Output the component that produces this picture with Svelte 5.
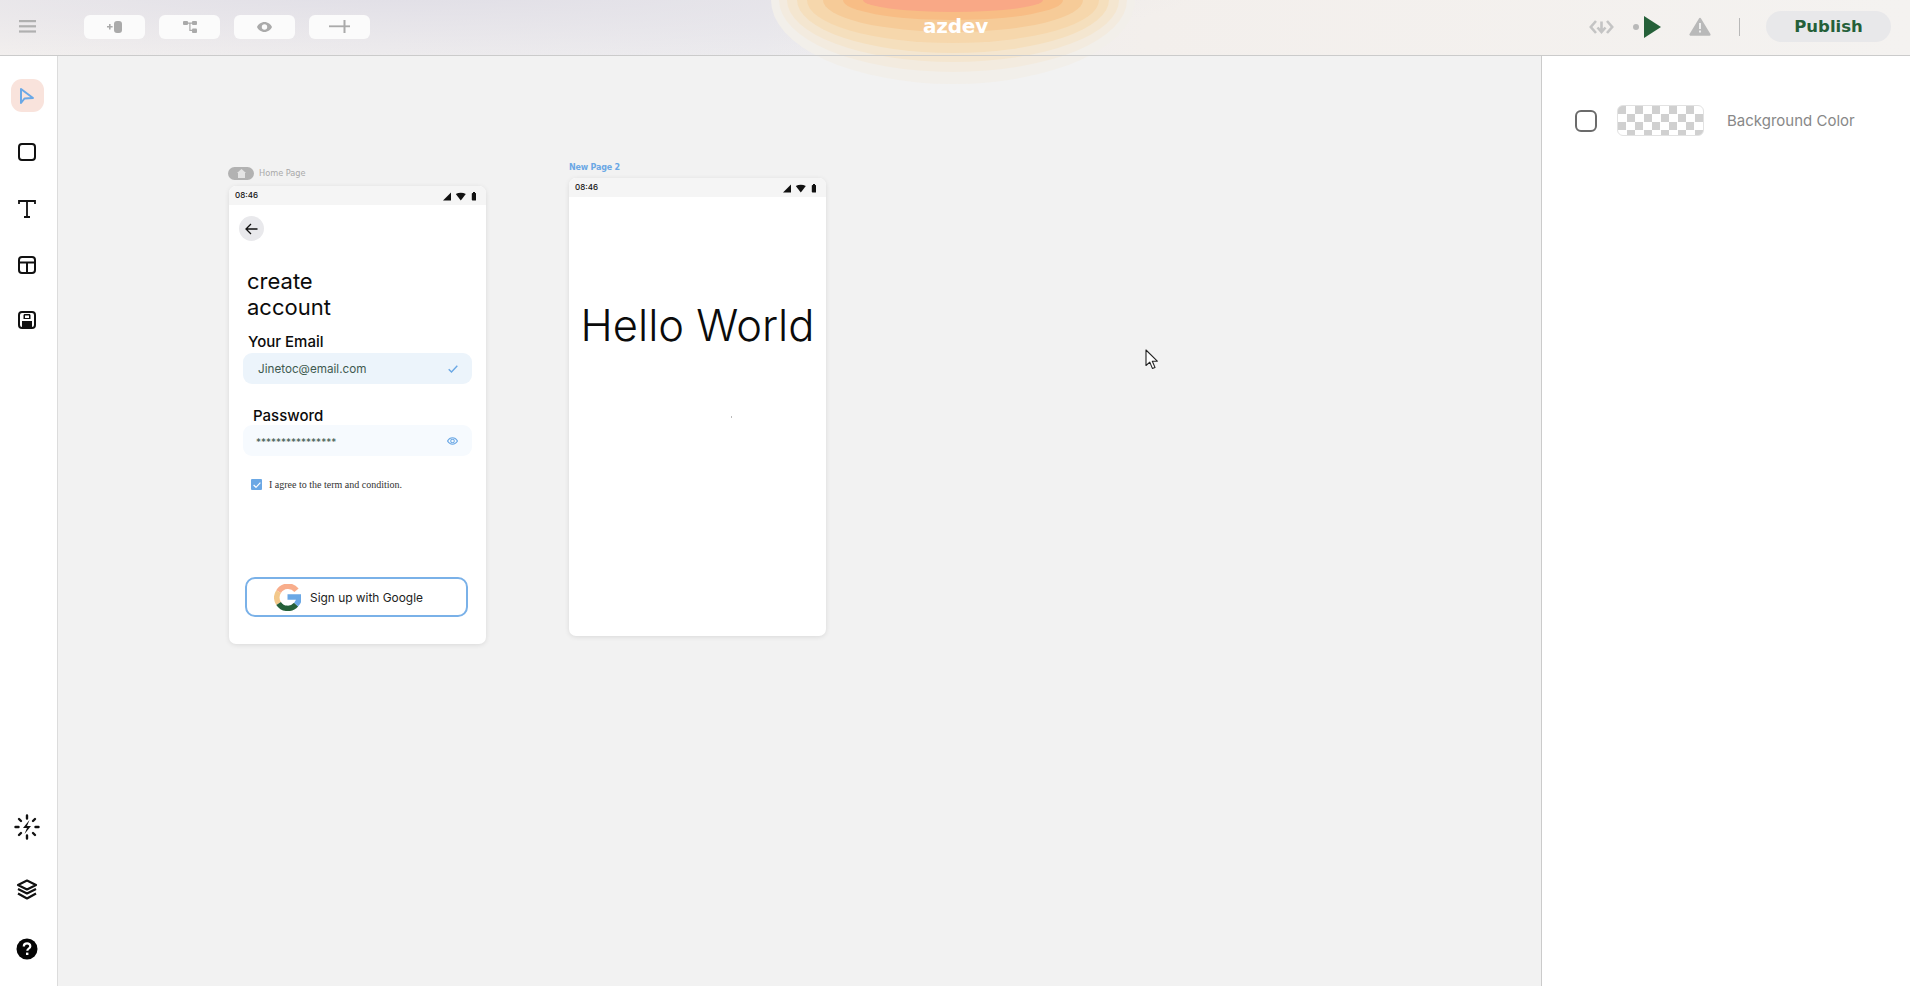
<script lang="ts">
	// stepped glow behind the logo: half width, depth, colour (outermost first)
	const rings = [
		{ a: 182, b: 84, c: '#f2efea' },
		{ a: 174, b: 72, c: '#f3ebdf' },
		{ a: 166, b: 62, c: '#f4e6d0' },
		{ a: 156, b: 53, c: '#f5dfbd' },
		{ a: 146, b: 43, c: '#f6d7ac' },
		{ a: 130, b: 32, c: '#f6cb98' },
		{ a: 110, b: 20, c: '#f8bd85' },
		{ a: 90, b: 12, c: '#f9a886' }
	];
</script>

{#snippet statusBar()}
	<div class="status">
		<span>08:46</span>
		<svg width="33" height="10" viewBox="0 0 33 10" fill="#111">
			<path d="M0 9.500 8 1.500v8z" />
			<path d="M12.800 3c3-1.700 7-1.700 10 0l-5 6.500z" />
			<rect x="28.800" y="2" width="4.400" height="7.500" rx=".8" />
			<rect x="30" y="1" width="2" height="1.500" />
		</svg>
	</div>
{/snippet}

<div class="app">
	<header class="topbar">
		<div class="glow">
			{#each rings as r}
				<i style="width:{r.a * 2}px;height:{r.b * 2}px;margin-left:{-r.a}px;margin-top:{-r.b}px;background:{r.c}"></i>
			{/each}
		</div>
		<div class="top-left">
			<button class="menu" aria-label="menu">
				<svg width="17" height="13" viewBox="0 0 17 13" fill="#b0b0b0"><rect y="0" width="17" height="2.200" /><rect y="5.200" width="17" height="2.200" /><rect y="10.400" width="17" height="2.200" /></svg>
			</button>
			<div class="top-tools">
				<button class="tool-btn" aria-label="add screen">
					<svg width="16" height="12" viewBox="0 0 16 12" fill="#aaa"><rect x="7" y="0" width="8" height="12" rx="3" /><path d="M0 5h2V3h1.600v2h2v1.600h-2v2H2v-2H0z" /></svg>
				</button>
				<button class="tool-btn" aria-label="flow">
					<svg width="14" height="12" viewBox="0 0 14 12" fill="#aaa"><rect x="0" y="0" width="5" height="4" rx="1" /><rect x="9" y="0" width="5" height="4" rx="1" /><rect x="9" y="7.500" width="5" height="4.500" rx="1" /><path d="M5 1.500h4v1.200H7.500v6H9v1.200H6.300V2.700H5z" /></svg>
				</button>
				<button class="tool-btn" aria-label="preview">
					<svg width="15" height="10" viewBox="0 0 15 10"><path fill-rule="evenodd" fill="#aaa" d="M7.500 0C11 0 13.800 2.400 15 5c-1.200 2.600-4 5-7.500 5S1.200 7.600 0 5C1.200 2.400 4 0 7.500 0zm0 2.300a2.700 2.700 0 1 0 0 5.400 2.700 2.700 0 0 0 0-5.400z" /></svg>
				</button>
				<button class="tool-btn" aria-label="add">
					<svg width="21" height="13" viewBox="0 0 21 13" fill="#aaa"><rect x="0" y="5.400" width="21" height="1.800" /><rect x="14.500" y="0" width="2" height="13" /></svg>
				</button>
			</div>
		</div>
		<div class="logo">azdev</div>
		<div class="top-right">
			<svg width="25" height="18" viewBox="0 0 25 18" fill="none" stroke="#c4c4c4" stroke-width="2.600"><path d="M7 3 1.800 9 7 15M18 3l5.200 6-5.200 6M12.500 3.500v10M8.500 9.500l4 4.500 4-4.500" /></svg>
			<i class="run-dot"></i>
			<svg class="play" width="17" height="22" viewBox="0 0 17 22" fill="#256039"><path d="M0 0 17 11 0 22z" /></svg>
			<svg class="warn" width="22" height="19" viewBox="0 0 22 19"><path fill="#b9b9b9" stroke="#b9b9b9" stroke-width="2.400" stroke-linejoin="round" d="M11 2 1.600 17.500h18.800z" /><rect x="10" y="6" width="2" height="6" fill="#eee" /><rect x="10" y="13.500" width="2" height="2" fill="#eee" /></svg>
			<i class="sep"></i>
			<button class="publish">Publish</button>
		</div>
	</header>

	<div class="body">
		<nav class="sidebar">
			<div class="nav-group">
				<button class="nav-btn active" aria-label="select">
					<svg width="16" height="18" viewBox="0 0 16 18" fill="none" stroke="#6aa8e6" stroke-width="2"><path d="M2 2 14 11 5.500 11.500 2 16z" stroke-linejoin="round" /></svg>
				</button>
				<button class="nav-btn" aria-label="rectangle">
					<svg width="20" height="20" viewBox="0 0 20 20" fill="none" stroke="#111" stroke-width="2"><rect x="2" y="2" width="16" height="16" rx="3" /></svg>
				</button>
				<button class="nav-btn" aria-label="text">
					<svg width="20" height="20" viewBox="0 0 20 20" fill="none" stroke="#111" stroke-width="1.800"><path d="M2 5V2h16v3M10 2v16M7 18h6" /></svg>
				</button>
				<button class="nav-btn" aria-label="layout">
					<svg width="20" height="20" viewBox="0 0 20 20" fill="none" stroke="#111" stroke-width="2"><rect x="2" y="2" width="16" height="16" rx="3" /><path d="M2 7.500h16M10 7.500V18" /></svg>
				</button>
				<button class="nav-btn" aria-label="component">
					<svg width="20" height="20" viewBox="0 0 20 20"><rect x="2" y="2" width="16" height="16" rx="3" fill="none" stroke="#111" stroke-width="2" /><rect x="5" y="11" width="10" height="7" fill="#111" /><path d="M6.500 9V5.500c0-1 .5-1.500 1.500-1.500h4c1 0 1.500.5 1.500 1.500V9z" fill="#111" /><rect x="8" y="5.500" width="4" height="2.500" fill="#fff" /></svg>
				</button>
			</div>
			<div class="nav-group bottom">
				<button class="nav-btn" aria-label="ai">
					<svg width="26" height="26" viewBox="0 0 26 26" fill="none" stroke="#111" stroke-width="2.400" stroke-linecap="round"><path d="M13 1.500v3M13 21.500v3M1.500 13h3M21.500 13h3M5 5l2 2M19 19l2 2M21 5l-2 2M7 19l-2 2" /><path d="M15.500 6 9 14h4l-2.500 6 6.500-8h-4z" fill="#111" stroke="none" /></svg>
				</button>
				<button class="nav-btn layers" aria-label="layers">
					<svg width="22" height="22" viewBox="0 0 22 22" fill="none" stroke="#111" stroke-width="2.200" stroke-linejoin="round"><path d="M11 1.500 20 6l-9 4.500L2 6z" /><path d="M2 10 11 14.500 20 10" /><path d="M2 14.500 11 19.500l9-5" /></svg>
				</button>
				<button class="nav-btn" aria-label="help">
					<svg width="22" height="22" viewBox="0 0 22 22"><circle cx="11" cy="11" r="10.500" fill="#050505" /><path d="M7.800 8.500c0-2 1.400-3.100 3.300-3.100s3.200 1.100 3.200 2.800c0 2.300-3 2.300-3 4.600" fill="none" stroke="#fff" stroke-width="2.200" /><rect x="10" y="14.600" width="2.400" height="2.400" fill="#fff" /></svg>
				</button>
			</div>
		</nav>

		<main class="canvas">
			<div class="page-label home-label" style="left:170px;top:111px">
				<span class="home-pill">
					<svg width="9" height="9" viewBox="0 0 9 9" fill="#e4e4e4"><path d="M4.500 0 9 4H8v5H1V4H0z" /></svg>
				</span>
				<span>Home Page</span>
			</div>
			<section class="phone" style="left:171px;top:130px;height:458px">
				{@render statusBar()}
				<div class="phone-body">
					<button class="back" aria-label="back">
						<svg width="13" height="12" viewBox="0 0 13 12" fill="none" stroke="#111" stroke-width="1.300"><path d="M12.500 6H1M6 1 1 6l5 5" /></svg>
					</button>
					<h1>create<br />account</h1>
					<label class="field-label" for="email">Your Email</label>
					<div class="input filled" id="email">
						<span>Jinetoc@email.com</span>
						<svg width="10" height="8" viewBox="0 0 10 8" fill="none" stroke="#6ba8e5" stroke-width="1.400"><path d="M.7 4.200 3.500 7 9.300.7" /></svg>
					</div>
					<label class="field-label pw" for="password">Password</label>
					<div class="input" id="password">
						<span class="stars">****************</span>
						<svg width="11" height="8" viewBox="0 0 11 8" fill="none" stroke="#6ba8e5" stroke-width="1.100"><path d="M.5 4C1.800 1.800 3.500.8 5.500.8S9.200 1.800 10.500 4C9.200 6.200 7.500 7.200 5.500 7.200S1.800 6.200.5 4z" /><circle cx="5.500" cy="4" r="1.800" /></svg>
					</div>
					<div class="agree">
						<span class="check">
							<svg width="8" height="6" viewBox="0 0 8 6" fill="none" stroke="#fff" stroke-width="1.200"><path d="M.6 3 3 5.300 7.400.6" /></svg>
						</span>
						<span>I agree to the term and condition.</span>
					</div>
					<button class="google">
						<svg width="27" height="27" viewBox="0 0 27 27" fill="none" stroke-width="5.500">
							<path d="M22.500 6.200A11 11 0 0 0 4.600 7.600" stroke="#f8ad8b" />
							<path d="M4.600 7.600a11 11 0 0 0 0 11.800" stroke="#f3c88b" />
							<path d="M4.600 19.400a11 11 0 0 0 17.500 1.200" stroke="#256039" />
							<path d="M22.100 20.600c2.300-2.300 3.200-4.700 2.900-7.600H13.500" stroke="#6ba8e5" />
						</svg>
						<span>Sign up with Google</span>
					</button>
				</div>
			</section>

			<div class="page-label new-label" style="left:511px;top:105px">New Page 2</div>
			<section class="phone" style="left:511px;top:122px;height:458px">
				{@render statusBar()}
				<div class="hello-wrap">
					<div class="hello">Hello World</div>
					<i class="speck"></i>
				</div>
			</section>

			<svg class="cursor" width="14" height="21" viewBox="0 0 14 21"><path d="M1 1v15.500l3.800-3.400 2.600 6.300 2.600-1-2.700-6.200h5z" fill="#fff" stroke="#222" stroke-width="1.100" stroke-linejoin="round" /></svg>
		</main>

		<aside class="panel">
			<div class="bg-row">
				<span class="box"></span>
				<span class="swatch"></span>
				<span class="bg-label">Background Color</span>
			</div>
		</aside>
	</div>
</div>

<style>
	:global(body) {
		margin: 0;
		background: #f2f2f2;
		font-family: Inter, 'Liberation Sans', sans-serif;
	}
	button {
		border: none;
		background: none;
		padding: 0;
		font: inherit;
		cursor: pointer;
	}
	.app {
		width: 1910px;
		height: 986px;
		display: flex;
		flex-direction: column;
		overflow: hidden;
	}

	/* header */
	.topbar {
		height: 56px;
		box-sizing: border-box;
		padding-bottom: 3px;
		flex-shrink: 0;
		display: flex;
		align-items: center;
		justify-content: space-between;
		position: relative;
		background:
			radial-gradient(ellipse 800px 75px at 400px -10px, #e0dee6 0%, rgba(224, 222, 230, 0) 100%),
			linear-gradient(90deg, #f2efee 0%, #ecebee 40%, #f3efec 60%, #f4f2f0 100%);
		z-index: 2;
	}
	.topbar::after {
		content: '';
		position: absolute;
		left: 0;
		right: 0;
		bottom: 0;
		height: 1px;
		background: #cbcbcb;
	}
	.glow {
		position: absolute;
		left: 953px;
		top: 0;
		width: 0;
		height: 0;
		pointer-events: none;
	}
	.glow i {
		position: absolute;
		border-radius: 50%;
		clip-path: inset(50% 0 0 0);
	}
	.top-left, .top-right {
		position: relative;
	}
	.top-left {
		display: flex;
		align-items: center;
		padding-left: 19px;
	}
	.menu {
		display: flex;
		margin-right: 48px;
	}
	.top-tools {
		display: flex;
		gap: 14px;
	}
	.tool-btn {
		width: 61px;
		height: 24px;
		border-radius: 6px;
		background: #fbfbfb;
		display: flex;
		align-items: center;
		justify-content: center;
	}
	.logo {
		position: absolute;
		left: 923px;
		top: 13px;
		color: #fff;
		font-family: 'DejaVu Sans', sans-serif;
		font-weight: 700;
		font-size: 20px;
		line-height: 26px;
		letter-spacing: -0.2px;
	}
	.top-right {
		display: flex;
		align-items: center;
		padding-right: 19px;
	}
	.run-dot {
		width: 6px;
		height: 6px;
		border-radius: 50%;
		background: #b9b9b9;
		margin-left: 19px;
	}
	.play {
		margin-left: 5px;
	}
	.warn {
		margin-left: 28px;
	}
	.sep {
		width: 1px;
		height: 18px;
		background: #b8b8b8;
		margin-left: 28px;
		margin-right: 26px;
	}
	.publish {
		width: 125px;
		height: 31px;
		border-radius: 16px;
		background: #e8e8ea;
		color: #256039;
		font-family: 'DejaVu Sans', sans-serif;
		font-weight: 700;
		font-size: 16.500px;
	}

	/* main area */
	.body {
		flex: 1;
		min-height: 0;
		display: flex;
	}
	.sidebar {
		width: 58px;
		box-sizing: border-box;
		flex-shrink: 0;
		background: #fff;
		border-right: 1px solid #dcdcdc;
		display: flex;
		flex-direction: column;
		justify-content: space-between;
		align-items: center;
		padding: 23px 3px 21px 0;
	}
	.nav-group {
		display: flex;
		flex-direction: column;
		align-items: center;
		gap: 23.500px;
	}
	.nav-group .nav-btn:nth-child(5) {
		margin-top: -2px;
	}
	.nav-group.bottom {
		gap: 28px;
	}
	.nav-btn {
		width: 33px;
		height: 33px;
		border-radius: 11px;
		display: flex;
		align-items: center;
		justify-content: center;
	}
	.nav-btn.active {
		background: #f9e3dc;
	}
	.nav-btn.layers svg {
		margin-top: 4px;
	}

	/* canvas, frames sit on it freely */
	.canvas {
		flex: 1;
		position: relative;
		background: #f2f2f2;
	}
	.page-label {
		position: absolute;
		font-family: 'DejaVu Sans', sans-serif;
		font-size: 8.200px;
		line-height: 13px;
		white-space: nowrap;
	}
	.home-label {
		display: flex;
		align-items: center;
		gap: 5px;
		color: #a9a9a9;
	}
	.home-pill {
		width: 26px;
		height: 13px;
		border-radius: 7px;
		background: #b2b2b2;
		display: flex;
		align-items: center;
		justify-content: center;
	}
	.new-label {
		color: #6ba8e5;
		font-size: 8px;
		font-weight: 700;
		letter-spacing: -0.2px;
	}
	.phone {
		position: absolute;
		width: 257px;
		background: #fff;
		border-radius: 7px;
		overflow: hidden;
		box-shadow: 0 1px 5px rgba(0, 0, 0, 0.1);
		display: flex;
		flex-direction: column;
	}
	.status {
		height: 19px;
		box-sizing: border-box;
		padding: 0 10px 2px 6px;
		flex-shrink: 0;
		background: #f5f5f5;
		display: flex;
		align-items: center;
		justify-content: space-between;
		font-size: 8px;
		font-weight: 500;
		color: #111;
	}
	.status svg {
		margin-top: 2px;
	}
	.phone-body {
		flex: 1;
		display: flex;
		flex-direction: column;
		align-items: flex-start;
		padding: 11px 14px 0;
	}
	.back {
		width: 25px;
		height: 25px;
		border-radius: 50%;
		background: #e9e9ec;
		display: flex;
		align-items: center;
		justify-content: center;
		margin-left: -4.500px;
	}
	h1 {
		margin: 27px 0 0 4px;
		font-size: 22px;
		font-weight: 400;
		line-height: 26px;
		color: #0b0b0b;
	}
	.field-label {
		margin: 12px 0 0 5px;
		font-size: 15px;
		font-weight: 500;
		line-height: 19px;
		color: #0b0b0b;
	}
	.field-label.pw {
		margin: 22px 0 0 10px;
	}
	.input {
		width: 229px;
		height: 31px;
		box-sizing: border-box;
		border-radius: 9px;
		background: #f6fafe;
		display: flex;
		align-items: center;
		justify-content: space-between;
		padding: 0 14px 0 13px;
		margin-top: 0;
		font-size: 11.700px;
		color: #3f5a50;
	}
	.input.filled {
		background: #ecf4fb;
		padding-left: 15px;
		margin-top: 2px;
	}
	.stars {
		font-size: 10px;
		padding-top: 3px;
	}
	.agree {
		display: flex;
		align-items: center;
		gap: 7px;
		margin: 23px 0 0 8px;
		font-family: 'Liberation Serif', serif;
		font-size: 10px;
		color: #333;
	}
	.check {
		width: 11px;
		height: 11px;
		background: #6ba8e5;
		border-radius: 1px;
		display: flex;
		align-items: center;
		justify-content: center;
	}
	.google {
		width: 223px;
		height: 40px;
		box-sizing: border-box;
		margin: 87px 0 0 2px;
		border: 2px solid #7ab1e8;
		border-radius: 10px;
		background: #fff;
		display: flex;
		align-items: center;
		padding-left: 27px;
		gap: 9px;
		font-size: 11.900px;
		color: #222;
	}
	.hello-wrap {
		flex: 1;
		position: relative;
		padding-top: 102px;
	}
	.hello {
		font-size: 43.500px;
		font-weight: 300;
		line-height: 52px;
		text-align: center;
		color: #0b0b0b;
		white-space: nowrap;
	}
	.speck {
		position: absolute;
		left: 162px;
		top: 219px;
		width: 1px;
		height: 2px;
		background: #bbb;
	}
	.cursor {
		position: absolute;
		left: 1087px;
		top: 293px;
	}

	/* right panel */
	.panel {
		width: 369px;
		box-sizing: border-box;
		flex-shrink: 0;
		background: #fff;
		border-left: 1px solid #cbcbcb;
	}
	.bg-row {
		display: flex;
		align-items: center;
		padding: 49px 0 0 33px;
	}
	.box {
		width: 22px;
		height: 22px;
		box-sizing: border-box;
		border: 2px solid #6b6b6b;
		border-radius: 6px;
	}
	.swatch {
		width: 87px;
		height: 31px;
		margin-left: 20px;
		box-sizing: border-box;
		border: 1px solid #e2e2e2;
		border-radius: 6px;
		background-color: #fff;
		background-image: conic-gradient(#fff 25%, #d0d0d0 25% 50%, #fff 50% 75%, #d0d0d0 75%);
		background-size: 17px 16px;
	}
	.bg-label {
		margin-left: 23px;
		font-size: 15px;
		color: #888;
	}
</style>
